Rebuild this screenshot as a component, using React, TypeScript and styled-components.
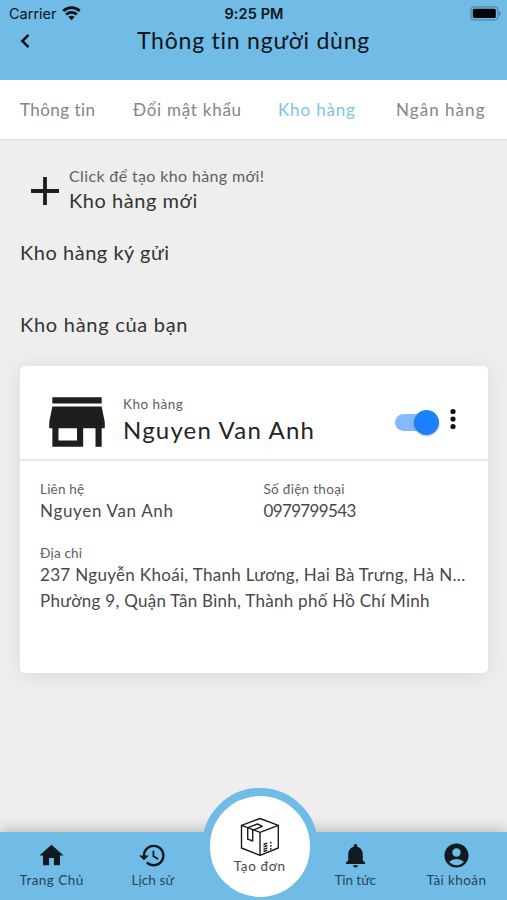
import React from 'react';
import styled, { createGlobalStyle } from 'styled-components';
import { MdHome, MdHistory, MdNotifications, MdAccountCircle, MdStore } from 'react-icons/md';

const SKY = '#70bce6';

const GlobalStyle = createGlobalStyle`
  * { box-sizing: border-box; }
  body { margin: 0; font-family: Lato, 'Noto Sans', sans-serif; color: #333; }
`;

const Screen = styled.div`
  display: flex;
  flex-direction: column;
  width: 507px;
  height: 900px;
  overflow: hidden;
  background: #eee;
`;

const Header = styled.header`
  height: 80px;
  background: ${SKY};
  color: #0c1418;
`;

const StatusBar = styled.div`
  display: grid;
  grid-template-columns: 1fr auto 1fr;
  align-items: center;
  height: 27px;
  padding: 0 6px 0 9px;
  font: 14.5px Inter, sans-serif;
`;

const Carrier = styled.div`
  display: flex;
  align-items: center;
  gap: 5px;
`;

const Clock = styled.div`
  margin-left: -2px;
  font-weight: 600;
  letter-spacing: 0.1px;
`;

const Battery = styled.svg`
  justify-self: end;
`;

const TitleRow = styled.div`
  display: grid;
  grid-template-columns: 60px 1fr 60px;
  align-items: center;
  height: 27px;
`;

const BackIcon = styled.svg`
  margin-left: 19px;
`;

const Title = styled.h1`
  margin: 0;
  font-size: 23px;
  font-weight: 400;
  line-height: 27px;
  letter-spacing: 0.77px;
  text-align: center;
`;

const Tabs = styled.nav`
  display: flex;
  height: 60px;
  padding: 0 0 0 20px;
  background: #fff;
  border-bottom: 1px solid #dcdcdc;
`;

const Tab = styled.a<{ $active?: boolean; $spacing: number; $width: number }>`
  width: ${(p) => p.$width}px;
  font-size: 17px;
  line-height: 60px;
  letter-spacing: ${(p) => p.$spacing}px;
  white-space: nowrap;
  color: ${(p) => (p.$active ? '#7cc3ea' : '#858585')};
`;

const Content = styled.main`
  flex: 1;
  padding: 23px 19px 0 20px;
`;

const CreateRow = styled.div`
  display: flex;
  align-items: center;
  gap: 9px;
  padding-left: 10px;
`;

const PlusIcon = styled.svg`
  margin-top: 7px;
`;

const Hint = styled.div`
  font-size: 16px;
  line-height: 25px;
  letter-spacing: 0.36px;
  color: #606060;
`;

const Heading = styled.h2<{ $gap?: number; $spacing: number }>`
  margin: ${(p) => p.$gap ?? 0}px 0 0;
  font-size: 20px;
  font-weight: 400;
  line-height: 24px;
  letter-spacing: ${(p) => p.$spacing}px;
`;

const Card = styled.section`
  height: 307px;
  margin-top: 30px;
  background: #fff;
  border-radius: 5px;
  box-shadow: 0 2px 20px rgba(0, 0, 0, 0.09);
`;

const CardHeader = styled.div`
  display: flex;
  align-items: center;
  height: 95px;
  padding: 18px 31px 0 19.5px;
  border-bottom: 2px solid #e8e8e8;
`;

const StoreIcon = styled(MdStore)`
  flex: none;
  color: #1d1f1f;
`;

const CardTitle = styled.div`
  flex: 1;
  margin: -2px 0 0 9.5px;
`;

const Label = styled.div<{ $spacing: number }>`
  font-size: 13.5px;
  line-height: 18px;
  letter-spacing: ${(p) => p.$spacing}px;
  color: #606060;
`;

const WarehouseName = styled.div`
  font-size: 24px;
  line-height: 34px;
  letter-spacing: 1.2px;
  color: #242424;
`;

const Toggle = styled.div`
  display: flex;
  align-items: center;
  justify-content: flex-end;
  width: 41px;
  height: 17px;
  margin: 1px 13px 0 0;
  border-radius: 9px;
  background: #86b8ff;
`;

const Knob = styled.div`
  flex: none;
  width: 25px;
  height: 25px;
  margin-right: -3px;
  border-radius: 50%;
  background: #1b80fc;
  box-shadow: 0 1px 2px rgba(0, 0, 0, 0.3);
`;

const MenuDots = styled.svg`
  flex: none;
  margin-top: -6px;
  fill: #111;
`;

const Details = styled.div`
  display: grid;
  grid-template-columns: 223.5px 1fr;
  row-gap: 20px;
  padding: 19px 19px 0 20px;
`;

const Field = styled.div<{ $wide?: boolean }>`
  grid-column: ${(p) => (p.$wide ? '1 / -1' : 'auto')};
`;

const Value = styled.div<{ $spacing: number }>`
  font-size: 17px;
  line-height: 26px;
  letter-spacing: ${(p) => p.$spacing}px;
  white-space: nowrap;
  color: #484848;
`;

const BottomBar = styled.nav`
  position: relative;
  display: grid;
  grid-template-columns: repeat(5, 1fr);
  height: 68px;
  padding-left: 1px;
  background: ${SKY};
  box-shadow: 0 -2px 14px rgba(0, 0, 0, 0.24);
`;

const NavItem = styled.a<{ $column: number }>`
  grid-column: ${(p) => p.$column};
  display: flex;
  flex-direction: column;
  align-items: center;
  padding-top: 9px;
  color: #111a1f;
`;

const NavLabel = styled.span<{ $spacing: number; $muted?: boolean }>`
  margin-top: ${(p) => (p.$muted ? 0 : 1)}px;
  font-size: 13.5px;
  line-height: 18px;
  letter-spacing: ${(p) => p.$spacing}px;
  white-space: nowrap;
  color: ${(p) => (p.$muted ? '#4a4a4a' : '#284455')};
`;

const CreateOrder = styled.a`
  position: absolute;
  top: -44px;
  left: 201.5px;
  display: flex;
  flex-direction: column;
  align-items: center;
  width: 116.5px;
  height: 116.5px;
  padding-top: 21px;
  border: 8px solid ${SKY};
  border-radius: 50%;
  background: #fff;
`;

const WifiIcon = () => (
  <svg width="19" height="15" viewBox="0 0 19 15" fill="none" stroke="#0c1418" strokeWidth="2.9">
    <path d="M1.3 5C6 .5 13 .5 17.7 5" />
    <path d="M4.200 8.500c3-2.800 7.600-2.800 10.600 0" />
    <path d="M6.300 10.900c1.800-1.700 4.600-1.700 6.400 0L9.500 14.200z" fill="#0c1418" stroke="none" />
  </svg>
);

const BoxIcon = () => (
  <svg width="40" height="40" viewBox="0 0 40 40" fill="none" stroke="#1c1c1c" strokeWidth="1.4" strokeLinejoin="round">
    <path d="M20 1.500 38.300 8.300V31L20 38.300 1.500 31V8.300zM1.500 8.300 20 15.300 38.300 8.300M20 15.300v23" />
    <path d="M7.700 10.600v11.600l5 1.800V13.300L22.300 9.300 17.500 7z" />
    <path d="M23.500 27.500l3.800-1.400M23.500 29.900l3.800-1.400M23.500 32.300l3.800-1.400M23.500 34.500l3.800-1.400M30.800 24.800v1.800M30.800 28v1.800M30.800 31v1.800" />
  </svg>
);

export default function App() {
  return (
    <>
      <GlobalStyle />
      <Screen>
        <Header>
          <StatusBar>
            <Carrier>Carrier <WifiIcon /></Carrier>
            <Clock>9:25 PM</Clock>
            <Battery width="31" height="15" viewBox="0 0 31 15">
              <rect x=".9" y=".9" width="27" height="13" rx="3.500" fill="none" stroke="#4f86a5" strokeWidth="1.200" />
              <rect x="2.800" y="2.800" width="23" height="9.200" rx="1.500" fill="#050709" />
              <path d="M29 5v5c2.200-.9 2.200-4.100 0-5z" fill="#4f86a5" />
            </Battery>
          </StatusBar>
          <TitleRow>
            <BackIcon width="12" height="16" viewBox="0 0 12 16" fill="none" stroke="#0c1418" strokeWidth="2.500">
              <path d="M9.500 1.800 3.300 8l6.200 6.200" />
            </BackIcon>
            <Title>Thông tin người dùng</Title>
          </TitleRow>
        </Header>
        <Tabs>
          <Tab $spacing={0.45} $width={113}>Thông tin</Tab>
          <Tab $spacing={0.75} $width={145}>Đổi mật khẩu</Tab>
          <Tab $spacing={0.85} $width={118}>
            <Tab as="span" $spacing={0.85} $width={118} $active>Kho hàng</Tab>
          </Tab>
          <Tab $spacing={1.05} $width={111}>Ngân hàng</Tab>
        </Tabs>
        <Content>
          <CreateRow>
            <PlusIcon width="30" height="30" viewBox="0 0 30 30" stroke="#1b1d1f" strokeWidth="3.800">
              <path d="M15 1v28M1 15h28" />
            </PlusIcon>
            <div>
              <Hint>Click để tạo kho hàng mới!</Hint>
              <Heading $spacing={0.55}>Kho hàng mới</Heading>
            </div>
          </CreateRow>
          <Heading $gap={28} $spacing={0.53}>Kho hàng ký gửi</Heading>
          <Heading $gap={48} $spacing={0.72}>Kho hàng của bạn</Heading>
          <Card>
            <CardHeader>
              <StoreIcon size={74} />
              <CardTitle>
                <Label $spacing={0.5}>Kho hàng</Label>
                <WarehouseName>Nguyen Van Anh</WarehouseName>
              </CardTitle>
              <Toggle><Knob /></Toggle>
              <MenuDots width="8" height="22" viewBox="0 0 8 22">
                <circle cx="4" cy="3.500" r="2.600" />
                <circle cx="4" cy="11" r="2.600" />
                <circle cx="4" cy="18.500" r="2.600" />
              </MenuDots>
            </CardHeader>
            <Details>
              <Field>
                <Label $spacing={0.2}>Liên hệ</Label>
                <Value $spacing={0.68}>Nguyen Van Anh</Value>
              </Field>
              <Field>
                <Label $spacing={0.3}>Số điện thoại</Label>
                <Value $spacing={-0.65}>0979799543</Value>
              </Field>
              <Field $wide>
                <Label $spacing={0.2}>Địa chỉ</Label>
                <Value $spacing={0.32}>237 Nguyễn Khoái, Thanh Lương, Hai Bà Trưng, Hà N...</Value>
                <Value $spacing={0.27}>Phường 9, Quận Tân Bình, Thành phố Hồ Chí Minh</Value>
              </Field>
            </Details>
          </Card>
        </Content>
        <BottomBar>
          <NavItem $column={1}><MdHome size={29} /><NavLabel $spacing={0.45}>Trang Chủ</NavLabel></NavItem>
          <NavItem $column={2}><MdHistory size={29} /><NavLabel $spacing={0.1}>Lịch sử</NavLabel></NavItem>
          <NavItem $column={4}><MdNotifications size={29} /><NavLabel $spacing={-0.05}>Tin tức</NavLabel></NavItem>
          <NavItem $column={5}><MdAccountCircle size={29} /><NavLabel $spacing={0.4}>Tài khoản</NavLabel></NavItem>
          <CreateOrder>
            <BoxIcon />
            <NavLabel $spacing={0.6} $muted>Tạo đơn</NavLabel>
          </CreateOrder>
        </BottomBar>
      </Screen>
    </>
  );
}
